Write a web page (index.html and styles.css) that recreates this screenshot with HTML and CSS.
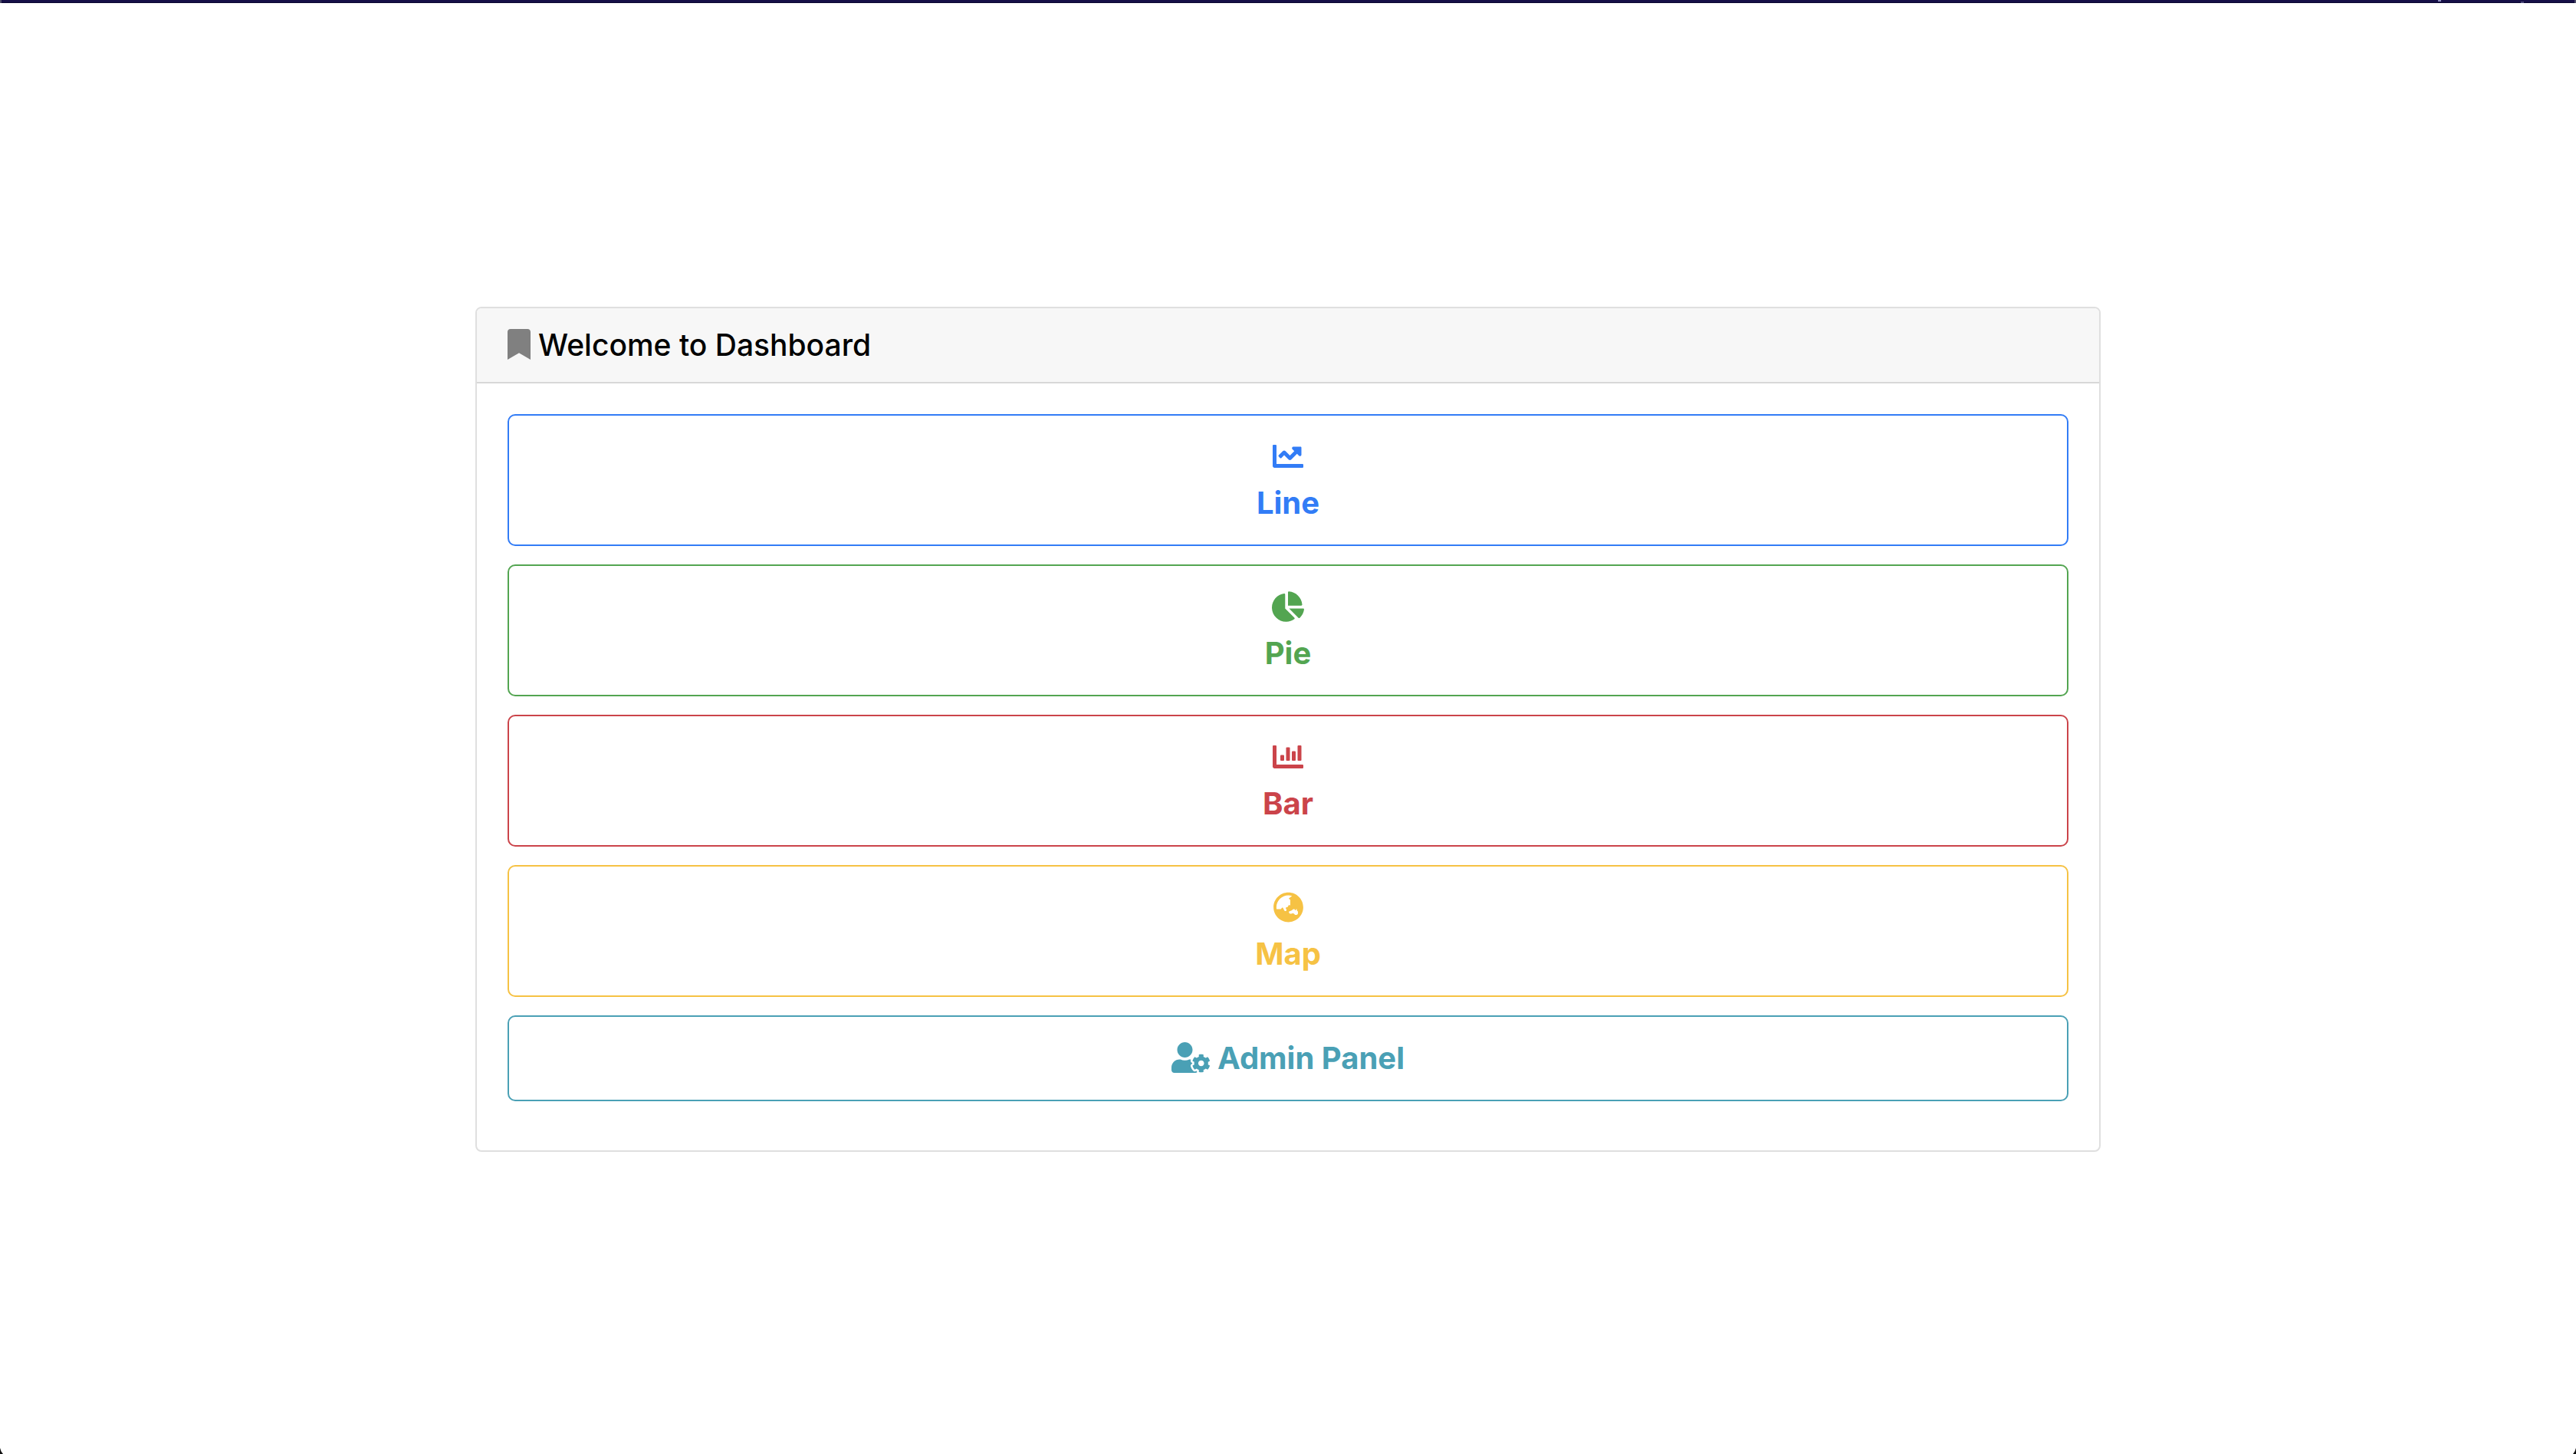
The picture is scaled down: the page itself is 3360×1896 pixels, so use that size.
FILE: index.html
```html
<!DOCTYPE html>
<html lang="en">
<head>
<meta charset="utf-8">
<meta name="viewport" content="width=device-width, initial-scale=1">
<title>Dashboard</title>
<link rel="stylesheet" href="styles.css">
</head>
<body>
<div class="topbar"></div>
<main class="page">
  <section class="card">
    <h1 class="card-header">
      <svg class="icon icon-muted" viewBox="0 0 384 512" width="30" height="40" aria-hidden="true"><path d="M0 512V48C0 21.49 21.49 0 48 0h288c26.51 0 48 21.49 48 48v464L192 400 0 512z"/></svg>
      <span>Welcome to Dashboard</span>
    </h1>
    <nav class="card-body">
      <a class="btn btn-stacked btn-primary" href="#line">
        <svg class="icon" viewBox="0 0 512 512" width="40" height="40" aria-hidden="true"><path d="M496 384H64V80c0-8.84-7.16-16-16-16H16C7.16 64 0 71.16 0 80v336c0 17.67 14.33 32 32 32h464c8.84 0 16-7.16 16-16v-32c0-8.84-7.16-16-16-16zM464 96H345.94c-21.38 0-32.09 25.85-16.97 40.97l32.4 32.4L288 242.75l-73.37-73.37c-12.5-12.5-32.76-12.5-45.25 0l-68.69 68.69c-6.25 6.25-6.25 16.38 0 22.63l22.62 22.62c6.25 6.25 16.38 6.25 22.63 0L192 237.25l73.37 73.37c12.5 12.5 32.76 12.5 45.25 0l96-96 32.4 32.4c15.12 15.12 40.97 4.41 40.97-16.97V112c.01-8.84-7.15-16-16-16z"/></svg>
        <span>Line</span>
      </a>
      <a class="btn btn-stacked btn-success" href="#pie">
        <svg class="icon" viewBox="0 0 544 512" width="42" height="40" aria-hidden="true"><path d="M527.79 288H290.5l158.03 158.03c6.04 6.04 15.98 6.53 22.19.68 38.7-36.46 65.32-85.61 73.13-140.86 1.34-9.46-6.51-17.85-16.06-17.85zm-15.83-64.8C503.72 103.74 408.26 8.28 288.8.04 279.68-.59 272 7.1 272 16.24V240h223.77c9.14 0 16.82-7.68 16.19-16.8zM224 288V50.71c0-9.55-8.39-17.4-17.84-16.06C86.99 51.49-4.1 155.6.14 280.37 4.5 408.51 114.83 513.59 243.03 511.98c50.4-.63 96.97-16.87 135.26-44.03 7.9-5.6 8.42-17.23 1.57-24.08L224 288z"/></svg>
        <span>Pie</span>
      </a>
      <a class="btn btn-stacked btn-danger" href="#bar">
        <svg class="icon" viewBox="0 0 512 512" width="40" height="40" aria-hidden="true"><path d="M496 384H64V80c0-8.84-7.16-16-16-16H16C7.16 64 0 71.16 0 80v336c0 17.67 14.33 32 32 32h464c8.84 0 16-7.16 16-16v-32c0-8.84-7.16-16-16-16z"/><rect x="128" y="224" width="64" height="96" rx="14"/><rect x="224" y="96" width="64" height="224" rx="14"/><rect x="320" y="160" width="64" height="160" rx="14"/><rect x="416" y="64" width="64" height="256" rx="14"/></svg>
        <span>Bar</span>
      </a>
      <a class="btn btn-stacked btn-warning" href="#map">
        <svg class="icon" viewBox="0 0 496 512" width="39" height="40" aria-hidden="true"><path d="M248 8C111.03 8 0 119.03 0 256s111.03 248 248 248 248-111.03 248-248S384.97 8 248 8zm-11.34 240.23c-2.89 4.82-8.1 7.77-13.72 7.77h-.31c-4.24 0-8.31 1.69-11.31 4.69l-5.66 5.66c-3.12 3.12-3.12 8.19 0 11.31l5.66 5.66c3 3 4.69 7.07 4.69 11.31V304c0 8.84-7.16 16-16 16h-6.11c-6.06 0-11.6-3.42-14.31-8.85l-22.62-45.23c-2.44-4.88-8.95-5.94-12.81-2.08l-19.47 19.46c-3 3-7.07 4.69-11.31 4.69H50.81C49.12 277.55 48 266.92 48 256c0-110.28 89.72-200 200-200 21.51 0 42.2 3.51 61.63 9.82l-50.16 38.53c-5.11 3.41-4.63 11.06.86 13.81l10.83 5.41c5.42 2.71 8.84 8.25 8.84 14.31V216c0 4.42-3.58 8-8 8h-3.06c-3.03 0-5.8-1.71-7.15-4.42-1.56-3.12-5.96-3.29-7.76-.3l-17.37 28.95zM408 358.43c0 4.24-1.69 8.31-4.69 11.31l-9.57 9.57c-3 3-7.07 4.69-11.31 4.69h-15.16c-4.24 0-8.31-1.69-11.31-4.69l-13.01-13.01a26.767 26.767 0 0 0-25.42-7.04l-21.27 5.32c-1.27.32-2.57.48-3.88.48h-10.34c-4.24 0-8.31-1.69-11.31-4.69l-11.91-11.91a8.008 8.008 0 0 1-2.34-5.66v-10.2c0-3.27 1.99-6.21 5.03-7.43l39.34-15.74c1.98-.79 3.86-1.82 5.59-3.05l23.71-16.89a7.978 7.978 0 0 1 4.64-1.48h12.09c3.23 0 6.15 1.94 7.39 4.93l5.35 12.85a4 4 0 0 0 3.69 2.46h3.8c1.78 0 3.35-1.18 3.84-2.88l4.2-14.47c.5-1.71 2.06-2.88 3.84-2.88h6.06c2.21 0 4 1.79 4 4v12.93c0 2.12.84 4.16 2.34 5.66l11.91 11.91c3 3 4.69 7.07 4.69 11.31v24.6z"/></svg>
        <span>Map</span>
      </a>
      <a class="btn btn-info" href="#admin">
        <svg class="icon" viewBox="0 0 640 512" width="50" height="40" aria-hidden="true"><path d="M610.5 373.3c2.6-14.1 2.6-28.5 0-42.6l25.8-14.9c3-1.7 4.3-5.2 3.3-8.5-6.7-21.6-18.2-41.2-33.2-57.4-2.3-2.5-6-3.1-9-1.4l-25.8 14.9c-10.9-9.3-23.4-16.5-36.9-21.3v-29.8c0-3.4-2.4-6.4-5.7-7.1-22.3-5-45-4.8-66.2 0-3.3.7-5.7 3.7-5.7 7.1v29.8c-13.5 4.8-26 12-36.9 21.3l-25.8-14.9c-2.9-1.7-6.7-1.1-9 1.4-15 16.2-26.5 35.8-33.2 57.4-1 3.3.4 6.8 3.3 8.5l25.8 14.9c-2.6 14.1-2.6 28.5 0 42.6l-25.8 14.9c-3 1.7-4.3 5.2-3.3 8.5 6.7 21.6 18.2 41.1 33.2 57.4 2.3 2.5 6 3.1 9 1.4l25.8-14.9c10.9 9.3 23.4 16.5 36.9 21.3v29.8c0 3.4 2.4 6.4 5.7 7.1 22.3 5 45 4.8 66.2 0 3.3-.7 5.7-3.7 5.7-7.1v-29.8c13.5-4.8 26-12 36.9-21.3l25.8 14.9c2.9 1.7 6.7 1.1 9-1.4 15-16.2 26.5-35.8 33.2-57.4 1-3.3-.4-6.8-3.3-8.5l-25.8-14.9zM496 400.5c-26.8 0-48.5-21.8-48.5-48.5s21.8-48.5 48.5-48.5 48.5 21.8 48.5 48.5-21.7 48.5-48.5 48.5zM224 256c70.7 0 128-57.3 128-128S294.7 0 224 0 96 57.3 96 128s57.3 128 128 128zm201.2 226.5c-2.3-1.2-4.6-2.6-6.8-3.9l-7.9 4.6c-6 3.4-12.8 5.3-19.6 5.3-10.9 0-21.4-4.6-28.9-12.6-18.3-19.8-32.3-43.9-40.2-69.6-5.5-17.7 1.9-36.4 17.9-45.7l7.9-4.6c-.1-2.6-.1-5.2 0-7.8l-7.9-4.6c-16-9.2-23.4-28-17.9-45.7.9-2.9 2.2-5.8 3.2-8.7-3.8-.3-7.5-1.2-11.4-1.2h-16.7c-22.2 10.2-46.9 16-72.9 16s-50.6-5.8-72.9-16h-16.7C60.2 288 0 348.2 0 422.4V464c0 26.5 21.5 48 48 48h352c10.1 0 19.5-3.2 27.2-8.5-1.2-3.8-2-7.7-2-11.8v-9.2z"/></svg>
        <span>Admin Panel</span>
      </a>
    </nav>
  </section>
</main>
<div class="corner corner-left"></div>
<div class="corner corner-right"></div>
</body>
</html>
```

FILE: styles.css
```css
* {
  box-sizing: border-box;
}

body {
  display: flex;
  flex-direction: column;
  min-height: 100vh;
  margin: 0;
  background: #fff;
  color: #000;
  font-family: Inter, "Liberation Sans", sans-serif;
  font-size: 40px;
  line-height: 60px;
}

.topbar {
  height: 4px;
  border: solid #4b4a68;
  border-width: 0 2px;
  background:
    linear-gradient(#8f8fc0, #8f8fc0) right 174px top / 4px 2px no-repeat,
    linear-gradient(#4d4a7c, #4d4a7c) right 66px bottom / 4px 2px no-repeat,
    linear-gradient(#160f47 75%, #0b0630 75%);
}

.page {
  display: flex;
  flex: 1;
  align-items: center;
  justify-content: center;
  padding: 42px 40px 40px;
}

.card {
  width: 100%;
  max-width: 2120px;
  overflow: hidden;
  border: 2px solid #dfdfdf;
  border-radius: 8px;
}

.card-header {
  display: flex;
  align-items: center;
  gap: 10px;
  margin: 0;
  padding: 18px 40px;
  border-bottom: 2px solid #d8d8d8;
  background: #f7f7f7;
  font-size: 39px;
  font-weight: 500;
}

.card-body {
  display: flex;
  flex-direction: column;
  gap: 24px;
  padding: 40px 40px 64px;
}

.icon {
  flex: none;
  margin: 9px 0 11px;
  fill: currentColor;
}

.icon-muted {
  color: #808080;
}

.btn {
  display: flex;
  align-items: center;
  justify-content: center;
  gap: 10px;
  padding: 24px;
  border: 2px solid currentColor;
  border-radius: 10px;
  font-weight: 700;
  text-decoration: none;
}

.btn-stacked {
  flex-direction: column;
  gap: 0;
}

.btn-primary {
  color: #327cf6;
}

.btn-success {
  color: #53a551;
}

.btn-danger {
  color: #cb444a;
}

.btn-warning {
  color: #f6c244;
}

.btn-info {
  color: #4aa0b5;
}

.corner {
  position: fixed;
  bottom: 0;
  width: 4px;
  height: 8px;
  background: #111;
}

.corner-left {
  left: 0;
  clip-path: polygon(0 0, 40% 60%, 100% 100%, 0 100%);
}

.corner-right {
  right: 0;
  clip-path: polygon(100% 0, 60% 60%, 0 100%, 100% 100%);
}
```
